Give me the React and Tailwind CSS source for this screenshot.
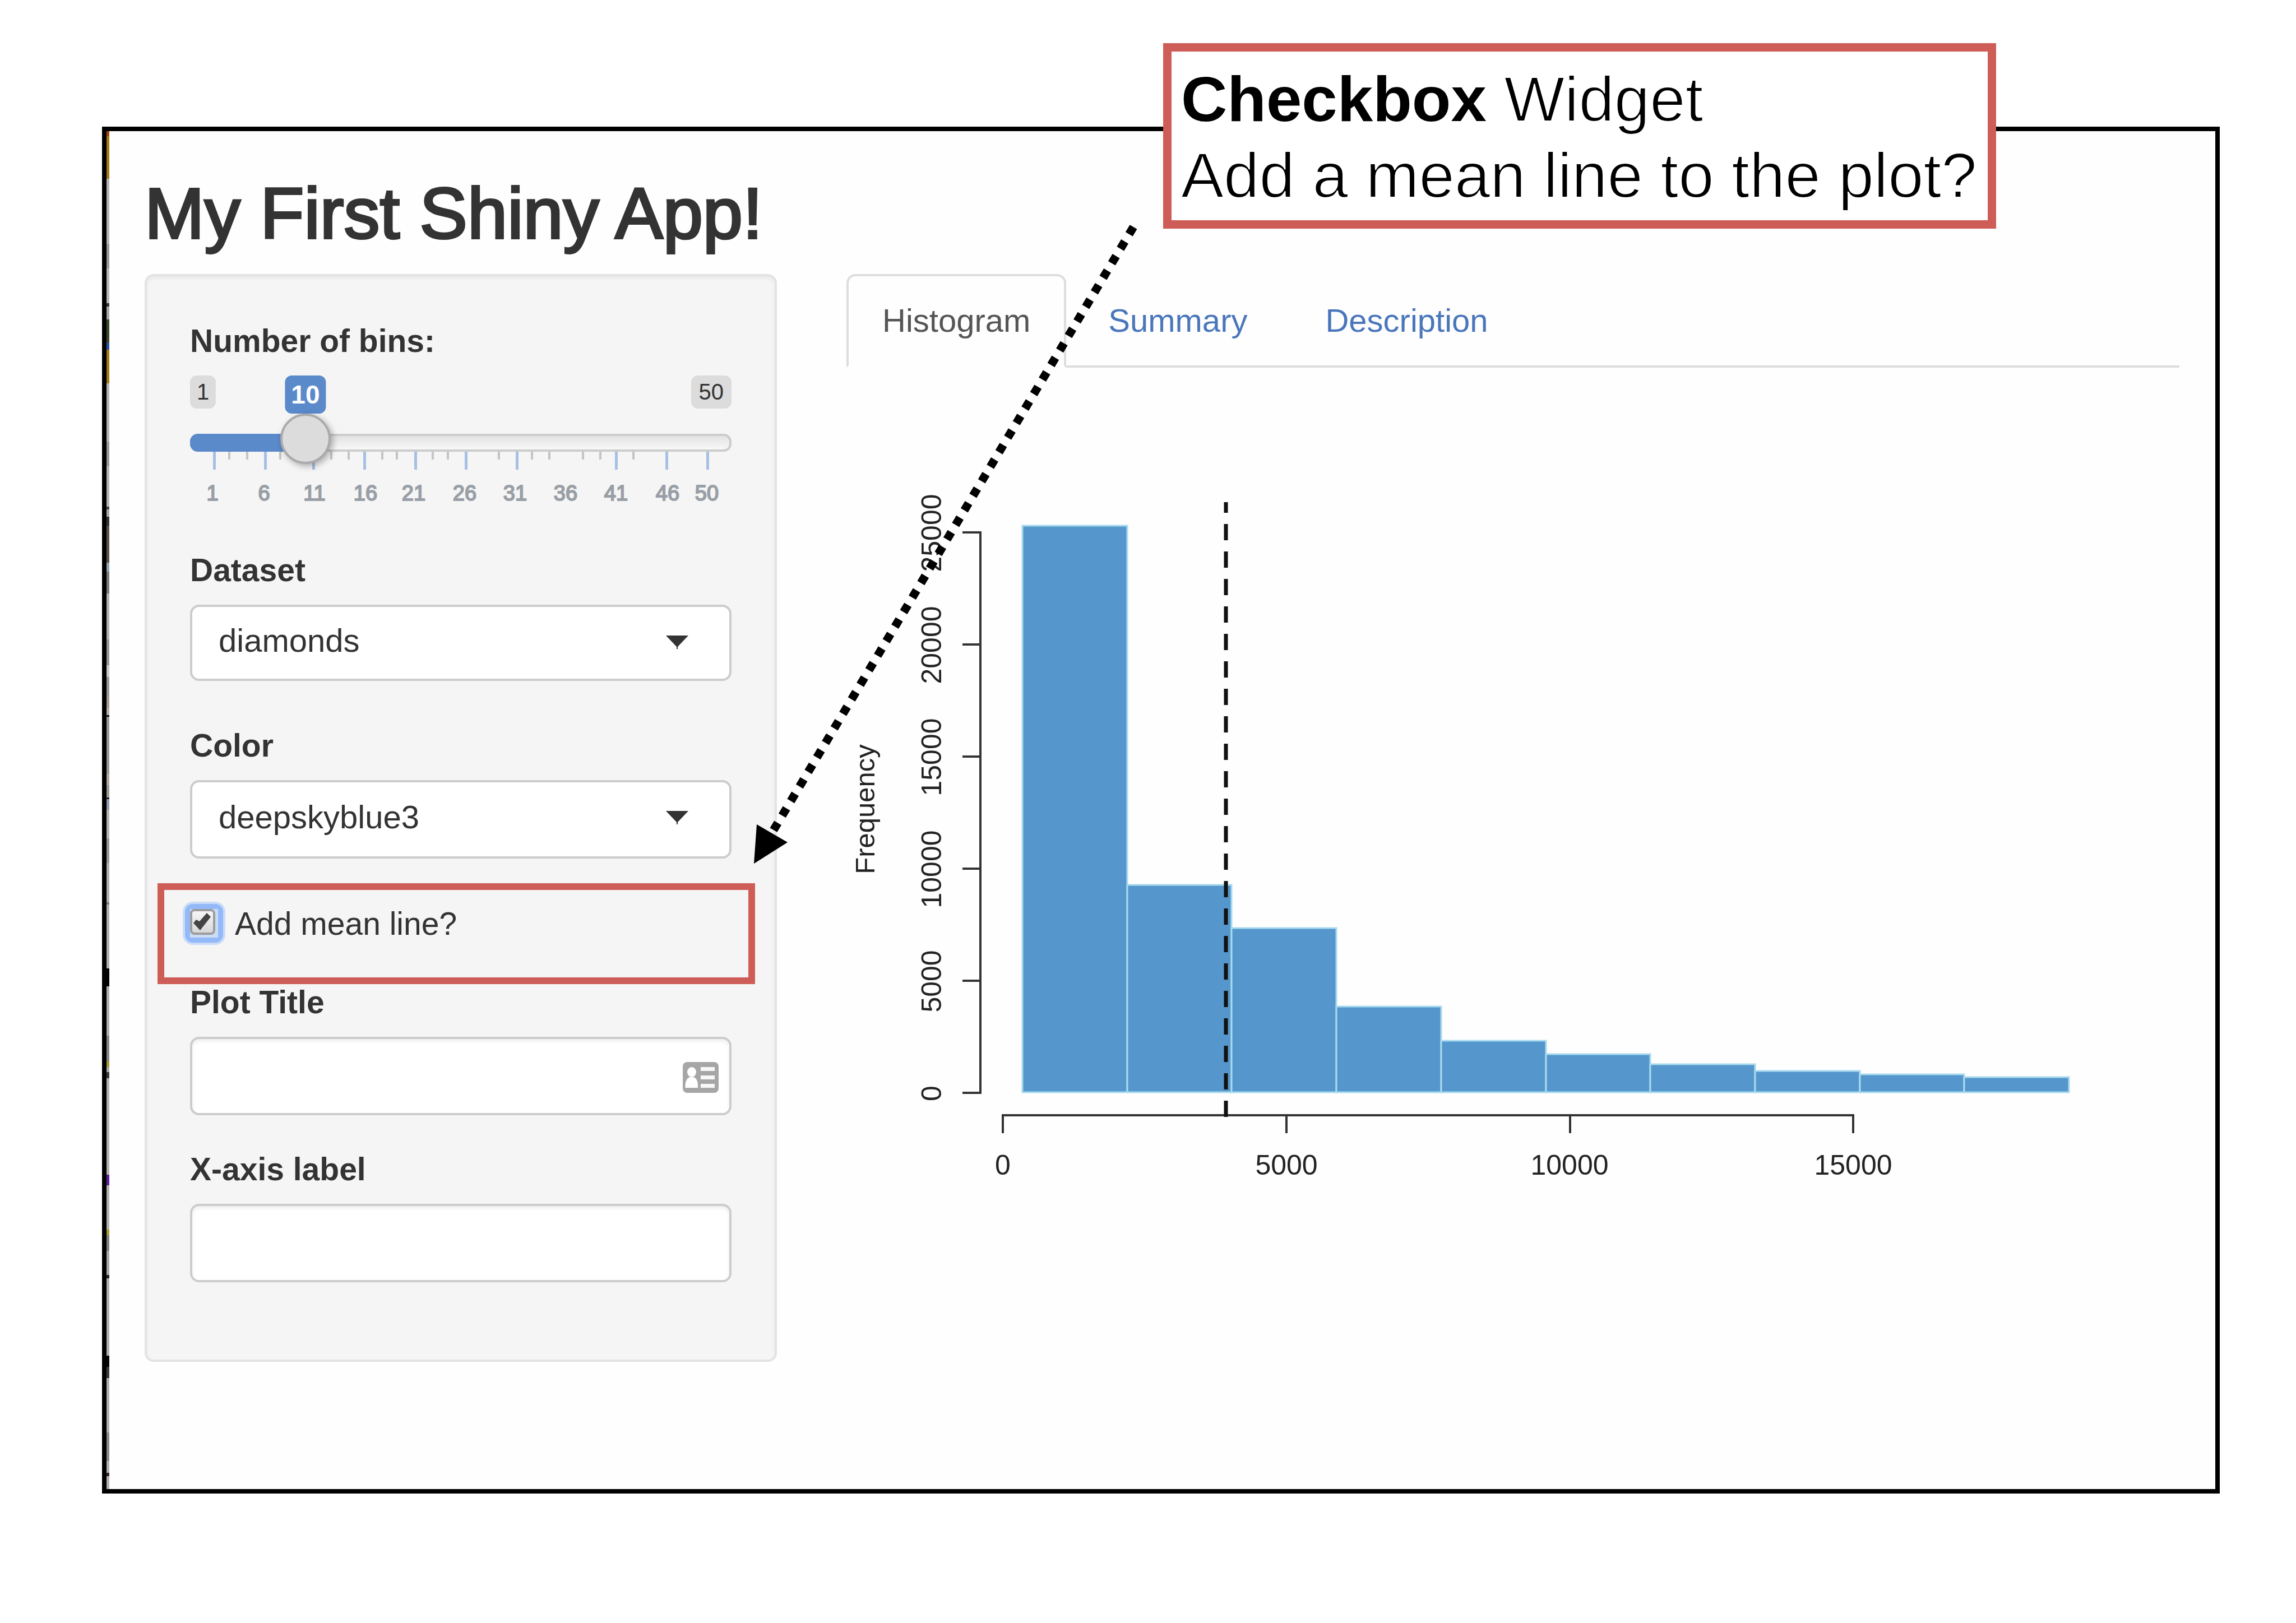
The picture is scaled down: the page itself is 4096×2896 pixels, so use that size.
import React, { useState } from "react";

const FONT = '"Liberation Sans", Arial, Helvetica, sans-serif';

// Slice of the desktop showing between the frame and the page: [height, colour]
const EDGE = [
  [9, "#a04512"], [76, "#a07a14"], [116, "#b5b3b1"], [44, "#9a9896"], [62, "#b8b6b4"], [6, "#333333"],
  [23, "#a8a6a4"], [41, "#3c4628"], [13, "#2b52a2"], [60, "#a07a14"], [104, "#b5b3b1"], [44, "#9a9896"],
  [72, "#b5b3b1"], [5, "#44464e"], [13, "#aaa8a6"], [16, "#333333"], [66, "#57524b"], [16, "#8fa3b5"],
  [39, "#7b7876"], [82, "#b2b0ae"], [46, "#989694"], [21, "#c8c6c4"], [35, "#9a9896"], [20, "#a59a92"],
  [13, "#b0aeac"], [3, "#111111"], [102, "#9a9896"], [20, "#b0a8a0"], [22, "#9a9896"], [3, "#222233"],
  [20, "#8f9aaa"], [51, "#b4b2b0"], [44, "#989694"], [70, "#b0aeac"], [4, "#777777"], [114, "#b0aeac"],
  [32, "#000000"], [88, "#b0aeac"], [46, "#888684"], [10, "#a89830"], [9, "#aaa8a6"], [11, "#3a3a3c"],
  [172, "#b2b0ae"], [19, "#5a20a0"], [79, "#b2b0ae"], [10, "#a89830"], [28, "#82807e"], [43, "#a8a6a4"],
  [6, "#222222"], [138, "#b0aeac"], [20, "#050505"], [20, "#3c3a38"], [97, "#b0aeac"], [51, "#8a8886"],
  [21, "#b0aeac"], [6, "#332222"], [23, "#b0aeac"],
];

const MAJOR = [43, 134, 220, 311, 402, 492, 583, 760, 850, 923];
const MINOR = [70, 102, 161, 252, 283, 343, 369, 433, 460, 551, 610, 641, 701, 732, 791];
const SCALE = [
  [40, 1], [132, 6], [222, 11], [313, 16], [399, 21], [490, 26], [580, 31], [670, 36], [760, 41], [852, 46], [922, 50],
];

const BAR_TOPS = [938, 1579, 1656, 1796, 1857, 1881, 1899, 1911, 1917, 1922];

function SliderInput() {
  const [bins, setBins] = useState(10);
  const at = (45 + (876 * (bins - 1)) / 49) / 966;
  const pct = `${at * 100}%`;
  return (
    <div className="mt-[22px]">
      <div className="relative flex h-[68px] items-start justify-between text-[40px] leading-[59px] text-[#333]">
        <span className="rounded-xl bg-[#dcdcdc] px-[12px]">1</span>
        <output
          htmlFor="bins"
          className="absolute top-0 -translate-x-1/2 rounded-xl bg-[#5b8acb] px-[11px] text-[46px] font-bold leading-[68px] text-white"
          style={{ left: pct }}
        >
          {bins}
        </output>
        <span className="rounded-xl bg-[#dcdcdc] px-[14px]">50</span>
      </div>
      <div className="relative z-10 h-[90px]">
        <div className="absolute inset-x-0 top-[36px] h-[32px] overflow-hidden rounded-[14px] border-4 border-[#ccc] bg-gradient-to-b from-[#e2e2e2] to-[#f8f8f8]" />
        <div className="absolute left-0 top-[36px] h-[32px] rounded-l-[14px] bg-[#5b8acb]" style={{ width: pct }} />
        <input
          id="bins"
          type="range"
          min="1"
          max="50"
          value={bins}
          onChange={(e) => setBins(Number(e.target.value))}
          className="relative m-0 block h-[90px] w-full appearance-none bg-transparent outline-none [&::-webkit-slider-thumb]:h-[90px] [&::-webkit-slider-thumb]:w-[90px] [&::-webkit-slider-thumb]:appearance-none [&::-webkit-slider-thumb]:rounded-full [&::-webkit-slider-thumb]:border-4 [&::-webkit-slider-thumb]:border-[#aaa] [&::-webkit-slider-thumb]:bg-[#dcdcdc] [&::-webkit-slider-thumb]:shadow-[4px_4px_12px_rgba(0,0,0,0.3)]"
        />
      </div>
      <svg viewBox="0 0 966 98" className="-mt-[22px] block w-full" aria-hidden="true">
        {MAJOR.map((x) => (
          <rect key={x} x={x - 2} y="0" width="5" height="32" fill="#a6c0e4" />
        ))}
        {MINOR.map((x) => (
          <rect key={x} x={x - 2} y="0" width="4" height="14" fill="#c4c4c4" />
        ))}
        {SCALE.map(([x, n]) => (
          <text key={n} x={x} y="87" fontSize="38" textAnchor="middle" fill="#999fa6" stroke="#999fa6" strokeWidth="2">
            {n}
          </text>
        ))}
      </svg>
    </div>
  );
}

function SelectField({ id, label, options, className, size }) {
  return (
    <div className={className}>
      <label htmlFor={id} className="block font-bold">
        {label}
      </label>
      <div className="relative mt-[22px]">
        <select
          id={id}
          className={`block w-full appearance-none rounded-[16px] border-4 border-[#ccc] bg-white pb-[8px] pl-[47px] text-[58px] outline-none ${size}`}
        >
          {options.map((o) => (
            <option key={o}>{o}</option>
          ))}
        </select>
        <svg viewBox="0 0 40 24" className="pointer-events-none absolute right-[77px] top-[55px] h-[24px] w-[40px]" aria-hidden="true">
          <path d="M0 0H40L21 20V24H19V20Z" fill="#333" />
        </svg>
      </div>
    </div>
  );
}

function TextField({ id, label, className, children }) {
  return (
    <div className={className}>
      <label htmlFor={id} className="block font-bold">
        {label}
      </label>
      <div className="relative mt-[22px]">
        <input
          id={id}
          type="text"
          className="block h-[140px] w-full rounded-[16px] border-4 border-[#ccc] bg-white px-[46px] shadow-[inset_0_4px_6px_rgba(0,0,0,0.07)] outline-none"
        />
        {children}
      </div>
    </div>
  );
}

function CardIcon() {
  return (
    <svg viewBox="0 0 64 55" className="pointer-events-none absolute right-[23px] top-[45px] h-[55px] w-[64px]" aria-hidden="true">
      <rect width="64" height="55" rx="8" fill="#a6a6a6" />
      <ellipse cx="16" cy="18" rx="8" ry="9" fill="#fff" />
      <path d="M4.500 46V42C4.500 34 8 28 13 27H19C24 28 27 34 27 42V46Z" fill="#fff" />
      <path d="M32 9H57V16H32ZM32 24H57V31H32ZM32 39H57V46H32Z" fill="#f8f8f8" />
    </svg>
  );
}

function MeanLineCheckbox() {
  const [on, setOn] = useState(true);
  return (
    <div className="-ml-[58px] -mr-[42px] mt-[44px] h-[180px] border-[12px] border-[#ce5d57] pl-[37px] pt-[20px]">
      <label className="flex items-start gap-[21px]">
        <span className="relative mt-[5px] block h-[69px] w-[68px] rounded-[14px] border-[9px] border-[#93b9f9] bg-[#93b9f9] shadow-[0_0_0_4px_#cadcf7]">
          <span className="block h-full w-full bg-[#cbdcf5]">
            <input
              type="checkbox"
              checked={on}
              onChange={() => setOn(!on)}
              className="block h-[46px] w-[45px] appearance-none rounded-[8px] border-4 border-[#9c9c9c] bg-gradient-to-b from-[#f6f6f6] to-[#d8d8d8] outline-none"
            />
          </span>
          {on && (
            <svg viewBox="0 0 44 45" className="pointer-events-none absolute left-0 top-0 h-[45px] w-[44px]" aria-hidden="true">
              <path d="M6 25L11 19L17 22L30 7L37 14L18 38Z" fill="#444" />
            </svg>
          )}
        </span>
        Add mean line?
      </label>
    </div>
  );
}

function Histogram() {
  const edge = (i) => Math.round(1824 + i * 186.7);
  return (
    <svg viewBox="1510 656 2378 1480" className="block w-full" role="img" aria-label="Histogram with mean line">
      <g fill="#5597cc" stroke="#a8daee" strokeWidth="3">
        {BAR_TOPS.map((y, i) => (
          <rect key={i} x={edge(i)} y={y} width={edge(i + 1) - edge(i)} height={1949 - y} />
        ))}
      </g>
      <path
        d="M1717 950H1749V1950H1717M1717 1150H1749M1717 1350H1749M1717 1550H1749M1717 1750H1749M1789 2022V1990H3306V2022M2295 1990V2022M2801 1990V2022"
        fill="none"
        stroke="#333"
        strokeWidth="4"
      />
      <path d="M2187 1993V896" stroke="#111" strokeWidth="7" strokeDasharray="29 20" />
      <g fontSize="50" textAnchor="middle" fill="#222">
        {[0, 5000, 10000, 15000, 20000, 25000].map((n, i) => (
          <text key={n} transform={`translate(1679 ${1951 - i * 200}) rotate(-90)`}>
            {n}
          </text>
        ))}
        {[0, 5000, 10000, 15000].map((n, i) => (
          <text key={n} x={1789 + Math.round(i * 505.5)} y="2096">
            {n}
          </text>
        ))}
        <text fontSize="49" transform="translate(1560 1444) rotate(-90)">
          Frequency
        </text>
      </g>
    </svg>
  );
}

export default function App() {
  return (
    <div
      className="relative flex min-h-screen flex-col bg-white pb-[231px] pl-[182px] pr-[136px] pt-[226px] text-[57px] leading-[80px] text-[#333]"
      style={{ fontFamily: FONT }}
    >
      <div className="flex flex-1 border-8 border-black bg-[#fefefe]">
        <div className="flex w-[5px] shrink-0 flex-col" aria-hidden="true">
          {EDGE.map(([h, c], i) => (
            <div key={i} style={{ flexGrow: h, backgroundColor: c }} />
          ))}
        </div>
        <div className="flex-1 pl-[63px] pr-[64px] pt-[77px]">
          <h1 className="text-[128px] leading-[140px] [-webkit-text-stroke:4px_#333]">My First Shiny App!</h1>
          <div className="mt-[38px] grid grid-cols-[1128fr_2378fr] items-start gap-[124px]">
            <form className="rounded-[16px] border-4 border-[#e3e3e3] bg-[#f5f5f5] px-[77px] pb-[138px] pt-[75px] shadow-[inset_0_4px_6px_rgba(0,0,0,0.05)]">
              <label htmlFor="bins" className="block font-bold">
                Number of bins:
              </label>
              <SliderInput />
              <SelectField id="dataset" label="Dataset" options={["diamonds"]} className="mt-[73px]" size="h-[136px]" />
              <SelectField id="color" label="Color" options={["deepskyblue3"]} className="mt-[75px]" size="h-[140px]" />
              <MeanLineCheckbox />
              <TextField id="title" label="Plot Title" className="-mt-[8px]">
                <CardIcon />
              </TextField>
              <TextField id="xlab" label="X-axis label" className="mt-[56px]" />
            </form>
            <main>
              <nav className="flex gap-[11px] border-b-4 border-[#ddd] text-[58px] text-[#4a77bb]">
                <a
                  href="#histogram"
                  aria-current="page"
                  className="-mb-1 rounded-t-[16px] border-4 border-[#ddd] border-b-[#fefefe] bg-[#fefefe] px-[60px] pb-[40px] pt-[39px] text-[#555]"
                >
                  Histogram
                </a>
                <a href="#summary" className="border-4 border-transparent px-[60px] pt-[39px]">
                  Summary
                </a>
                <a href="#description" className="border-4 border-transparent px-[60px] pt-[39px]">
                  Description
                </a>
              </nav>
              <Histogram />
            </main>
          </div>
        </div>
      </div>

      <svg viewBox="1330 395 720 1160" className="pointer-events-none absolute left-[1330px] top-[395px] z-20 h-[1160px] w-[720px]" aria-hidden="true">
        <path d="M2022 405L1380 1481" stroke="#000" strokeWidth="15" strokeDasharray="15 15.2" />
        <path d="M1345 1541L1350 1471L1405 1503Z" fill="#000" />
      </svg>

      <aside className="absolute left-[2075px] top-[77px] z-20 border-[15px] border-[#ce5d57] bg-white pb-[12px] pl-[17px] pr-[19px] pt-[17px] text-[114px] leading-[136px] text-black">
        <p className="whitespace-nowrap [-webkit-text-stroke:2px_white]">
          <b className="[-webkit-text-stroke:0]">Checkbox</b> Widget
        </p>
        <p className="whitespace-nowrap [-webkit-text-stroke:2px_white]">Add a mean line to the plot?</p>
      </aside>
    </div>
  );
}
